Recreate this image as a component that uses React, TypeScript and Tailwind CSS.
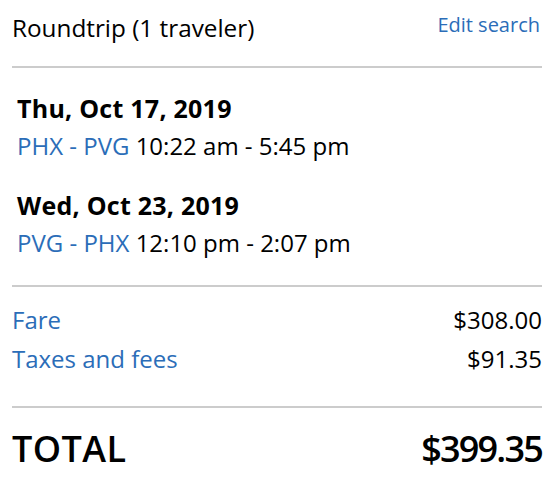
import React from 'react';

type Flight = { date: string; route: string; times: string };

const flights: Flight[] = [
  { date: 'Thu, Oct 17, 2019', route: 'PHX - PVG', times: '10:22 am - 5:45 pm' },
  { date: 'Wed, Oct 23, 2019', route: 'PVG - PHX', times: '12:10 pm - 2:07 pm' },
];

const charges = [
  { label: 'Fare', amount: '$308.00' },
  { label: 'Taxes and fees', amount: '$91.35' },
];

const App: React.FC = () => {
  return (
    <div
      className="min-h-screen bg-white text-black pl-3 pr-[18px]"
      style={{ fontFamily: '"Open Sans", "Noto Sans", sans-serif' }}
    >
      {/* Header */}
      <header className="flex justify-between items-start pt-[10px]">
        <h1 className="text-[24.3px] leading-[36px] font-normal">Roundtrip (1 traveler)</h1>
        <a href="#" className="text-[20px] leading-[30px] text-[#2b6db8] pr-[2px]">
          Edit search
        </a>
      </header>

      <div className="mt-5 h-[2px] bg-[#cccccc]" />

      {/* Flights */}
      <section className="pl-[5px] pt-[22px] pb-[24px] flex flex-col gap-[23px]">
        {flights.map((f) => (
          <div key={f.date} className="text-[24px] leading-[37px]">
            <div className="font-bold text-[25px] tracking-[0.25px]">{f.date}</div>
            <div>
              <span className="text-[#2b6db8]">{f.route}</span> {f.times}
            </div>
          </div>
        ))}
      </section>

      <div className="h-[2px] bg-[#cccccc]" />

      {/* Price breakdown */}
      <section className="pt-[13px] pb-[28px]">
        {charges.map((c) => (
          <div key={c.label} className="flex justify-between text-[24px] leading-[39px]">
            <span className="text-[#2b6db8]">{c.label}</span>
            <span>{c.amount}</span>
          </div>
        ))}
      </section>

      <div className="h-[2px] bg-[#cccccc]" />

      <div className="flex justify-between items-center pt-[17px] text-[36px] leading-[48px] font-semibold">
        <span className="tracking-[0.4px]">TOTAL</span>
        <span className="tracking-[-1.8px]">$399.35</span>
      </div>
    </div>
  );
};

export default App;
